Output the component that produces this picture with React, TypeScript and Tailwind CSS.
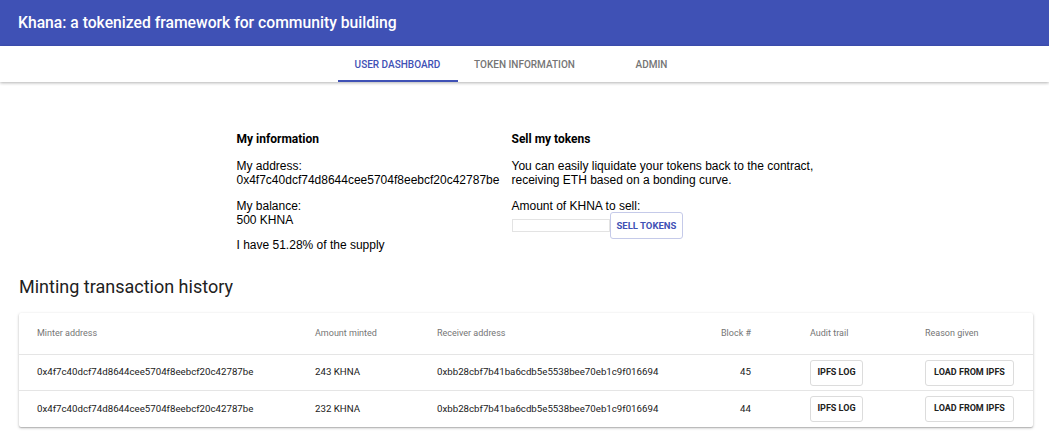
import React from "react";

const rows = [
  { minter: "0x4f7c40dcf74d8644cee5704f8eebcf20c42787be", amount: "243 KHNA", receiver: "0xbb28cbf7b41ba6cdb5e5538bee70eb1c9f016694", block: "45" },
  { minter: "0x4f7c40dcf74d8644cee5704f8eebcf20c42787be", amount: "232 KHNA", receiver: "0xbb28cbf7b41ba6cdb5e5538bee70eb1c9f016694", block: "44" },
];

const grid = "grid grid-cols-[278px_122px_252px_121px_115px_126px]";

export default function App() {
  return (
    <div className="min-h-[445px] bg-white font-['Roboto',sans-serif]">
      <header className="flex h-[46px] items-center bg-[#3f51b5] pl-[18px]">
        <h1 className="text-[15.7px] font-medium text-white">Khana: a tokenized framework for community building</h1>
      </header>
      <nav className="flex h-[36px] justify-center bg-white shadow-[0_1px_3px_rgba(0,0,0,0.3)]">
        <div className="relative flex w-[120px] items-center justify-center text-[10px] font-medium text-[#3f51b5]">
          USER DASHBOARD
          <span className="absolute bottom-0 left-0 h-[2px] w-full bg-[#3f51b5]" />
        </div>
        <div className="flex w-[134px] items-center justify-center text-[10px] font-medium text-[#757575]">TOKEN INFORMATION</div>
        <div className="flex w-[120px] items-center justify-center text-[10px] font-medium text-[#757575]">ADMIN</div>
      </nav>

      <section className="mt-[50px] flex justify-center font-['Liberation_Sans',Arial,sans-serif] text-[12px] leading-[14px] text-black">
        <div className="w-[275px]">
          <h2 className="mb-[13px] font-['Roboto',sans-serif] text-[12px] font-bold">My information</h2>
          <p>My address:<br />0x4f7c40dcf74d8644cee5704f8eebcf20c42787be</p>
          <p className="mt-[12px]">My balance:<br />500 KHNA</p>
          <p className="mt-[11px]">I have 51.28% of the supply</p>
        </div>
        <div className="w-[301px]">
          <h2 className="mb-[13px] font-['Roboto',sans-serif] text-[12px] font-bold">Sell my tokens</h2>
          <p className="whitespace-nowrap">You can easily liquidate your tokens back to the contract,<br />receiving ETH based on a bonding curve.</p>
          <p className="mt-[12px]">Amount of KHNA to sell:</p>
          <div className="-mt-[1px] flex items-center">
            <input className="h-[13px] w-[98px] border border-[#e3e3e3] bg-white" />
            <button className="h-[27px] rounded-[3px] border border-[#c5cae9] px-[6px] font-['Roboto',sans-serif] text-[9.5px] font-bold text-[#3f51b5]">SELL TOKENS</button>
          </div>
        </div>
      </section>

      <h2 className="ml-[19px] mt-[23px] text-[18px] leading-[24px] text-[#212121]">Minting transaction history</h2>

      <div className="ml-[19px] mt-[14px] w-[1014px] rounded-[2px] bg-white shadow-[0_1px_3px_rgba(0,0,0,0.25),0_1px_1px_rgba(0,0,0,0.14)]">
        <div className={`${grid} h-[42px] items-center border-b border-[#e5e5e5] text-[9px] text-[#757575]`}>
          <div className="pl-[18px]">Minter address</div>
          <div className="pl-[18px]">Amount minted</div>
          <div className="pl-[18px]">Receiver address</div>
          <div className="pr-[41px] text-right">Block #</div>
          <div className="pl-[18px]">Audit trail</div>
          <div className="pl-[18px]">Reason given</div>
        </div>
        {rows.map((r, i) => (
          <div key={i} className={`${grid} h-[36px] items-center text-[9.7px] text-[#212121] ${i === 0 ? "border-b border-[#e5e5e5]" : ""}`}>
            <div className="pl-[18px]">{r.minter}</div>
            <div className="pl-[18px]">{r.amount}</div>
            <div className="pl-[18px]">{r.receiver}</div>
            <div className="pr-[41px] text-right">{r.block}</div>
            <div className="pl-[18px]">
              <button className="h-[26px] w-[53px] rounded-[3px] border border-[#dcdcdc] text-[9px] font-bold text-[#212121]">IPFS LOG</button>
            </div>
            <div className="pl-[18px]">
              <button className="h-[26px] w-[89px] rounded-[3px] border border-[#dcdcdc] text-[9px] font-bold text-[#212121]">LOAD FROM IPFS</button>
            </div>
          </div>
        ))}
      </div>
    </div>
  );
}
